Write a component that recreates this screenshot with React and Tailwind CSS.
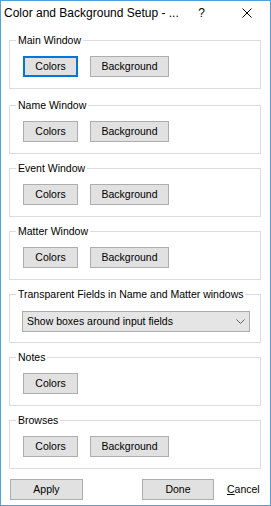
import React from 'react';

const font = { fontFamily: '"Liberation Sans", Arial, sans-serif' };

const Btn = ({ children, w, focused }) => (
  <button
    className={
      'h-[21px] flex items-center justify-center bg-[#e1e1e1] text-[10.5px] text-black leading-none ' +
      (focused ? 'border-2 border-[#0078d7] ' : 'border border-[#adadad] ') +
      w
    }
  >
    {children}
  </button>
);

const Group = ({ title, children, className = '' }) => (
  <fieldset className={'border border-[#dcdcdc] px-[6px] pb-[11px] ' + className}>
    <legend className="px-[2px] text-[10.5px] leading-[15px] text-black">{title}</legend>
    {children}
  </fieldset>
);

const ColorRow = ({ focused, colorsOnly }) => (
  <div className="flex gap-[12px] pl-[7px] mt-[8px]">
    <Btn w="w-[55px]" focused={focused}>Colors</Btn>
    {!colorsOnly && <Btn w="w-[79px]">Background</Btn>}
  </div>
);

export default function App() {
  return (
    <div style={font} className="w-[271px] h-[506px] border border-[#4ea1da] bg-white flex flex-col">
      {/* title bar */}
      <div className="h-[24px] flex items-center">
        <div className="flex-1 pl-[3px] text-[12px] text-black whitespace-nowrap">
          Color and Background Setup - ...
        </div>
        <div className="w-[46px] text-center text-[12px] text-black">?</div>
        <div className="w-[46px] flex justify-center">
          <svg width="10" height="10" viewBox="0 0 10 10">
            <path d="M0.5 0.5 L9.5 9.5 M9.5 0.5 L0.5 9.5" stroke="#000" strokeWidth="1" fill="none" />
          </svg>
        </div>
      </div>

      <div className="flex flex-col gap-[7px] pl-[8px] pr-[9px] mt-[8px]">
        <Group title="Main Window">
          <ColorRow focused />
        </Group>
        <Group title="Name Window" className="mt-[2px]">
          <ColorRow />
        </Group>
        <Group title="Event Window">
          <ColorRow />
        </Group>
        <Group title="Matter Window">
          <ColorRow />
        </Group>
        <fieldset className="border border-[#dcdcdc] px-[6px] pb-[10px]">
          <legend className="px-[2px] text-[10.5px] leading-[15px] text-black">
            Transparent Fields in Name and Matter windows
          </legend>
          <div className="ml-[6px] mt-[9px] w-[228px] h-[21px] border border-[#acacac] bg-[#e5e5e5] flex items-center justify-between pl-[4px] pr-[4px]">
            <span className="text-[10.5px] text-black">Show boxes around input fields</span>
            <svg width="9" height="5" viewBox="0 0 9 5">
              <path d="M0.5 0.5 L4.5 4.5 L8.5 0.5" stroke="#606060" strokeWidth="1" fill="none" />
            </svg>
          </div>
        </fieldset>
        <Group title="Notes">
          <ColorRow colorsOnly />
        </Group>
        <Group title="Browses">
          <ColorRow />
        </Group>
      </div>

      <div className="flex items-center pl-[9px] mt-[10px]">
        <Btn w="w-[73px]">Apply</Btn>
        <div className="ml-[59px]">
          <Btn w="w-[72px]">Done</Btn>
        </div>
        <span className="ml-[13px] text-[10.5px] text-black">
          <span className="underline">C</span>ancel
        </span>
      </div>
    </div>
  );
}
